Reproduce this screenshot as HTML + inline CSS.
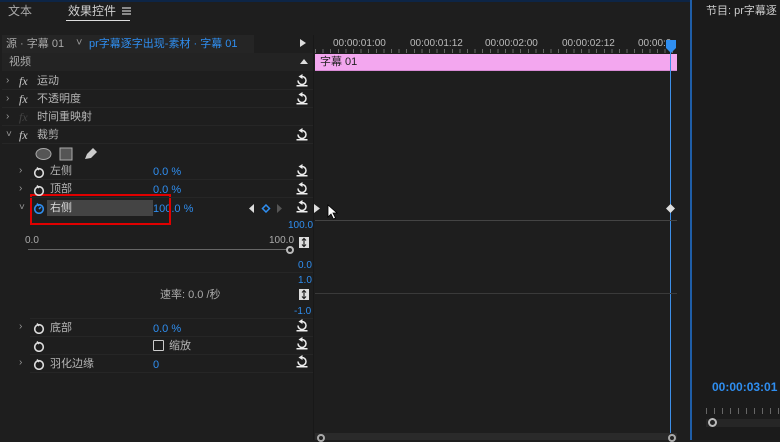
<!DOCTYPE html>
<html><head><meta charset="utf-8"><style>
*{margin:0;padding:0;box-sizing:border-box}
body{width:780px;height:440px;background:#1e1e1e;overflow:hidden;position:relative;font-family:"Liberation Sans","Noto Sans CJK SC",sans-serif;color:#b5b5b5;font-size:11px}
.t{position:absolute;white-space:nowrap;line-height:13px}
.b{color:#2f8ef0}
.r{position:absolute;left:296px;width:12px;height:13px}
.line{position:absolute;height:1px;background:#262626}
.sw{position:absolute;width:12px;height:12px}
.ch{position:absolute;color:#999;font-size:10px}
</style></head><body>
<div style="position:absolute;left:0;top:0;width:690px;height:2px;background:#0d2546"></div>
<div style="position:absolute;left:690px;top:0;width:2px;height:440px;background:#1f5ea8"></div>
<div style="position:absolute;left:692px;top:0;width:88px;height:440px;background:#1b1b1b"></div>
<div class="t" style="left:8px;top:5px;font-size:12px;color:#aaa">文本</div>
<div class="t" style="left:68px;top:5px;font-size:12px;color:#d0d0d0">效果控件</div>
<svg style="position:absolute;left:122px;top:7px" width="9" height="8"><path d="M0 1H9M0 4H9M0 7H9" stroke="#ccc" stroke-width="1.2"/></svg>
<div style="position:absolute;left:66px;top:20px;width:64px;height:1px;background:#ddd"></div>
<!-- source row -->
<div style="position:absolute;left:2px;top:35px;width:252px;height:18px;background:#252525"></div>
<div style="position:absolute;left:2px;top:53px;width:311px;height:18px;background:#232323"></div>
<div class="t" style="left:6px;top:38px;color:#a8a8a8">源 · 字幕 01</div>
<div class="t" style="left:76px;top:37px;color:#999">˅</div>
<div class="t b" style="left:89px;top:38px">pr字幕逐字出现-素材 · 字幕 01</div>
<svg style="position:absolute;left:300px;top:39px" width="6" height="8"><path d="M0 0L6 4L0 8Z" fill="#ddd"/></svg>
<svg style="position:absolute;left:300px;top:59px" width="8" height="5"><path d="M0 5L4 0L8 5Z" fill="#ddd"/></svg>
<div class="t" style="left:9px;top:56px;color:#aaa">视频</div>
<!-- rows -->
<div class="ch" style="left:6px;top:75px">›</div><div class="t" style="left:19px;top:75px;font-style:italic;font-family:'Liberation Serif',serif;color:#ccc;font-size:12px">fx</div><div class="t" style="left:37px;top:75px">运动</div>
<div class="ch" style="left:6px;top:93px">›</div><div class="t" style="left:19px;top:93px;font-style:italic;font-family:'Liberation Serif',serif;color:#ccc;font-size:12px">fx</div><div class="t" style="left:37px;top:93px">不透明度</div>
<div class="ch" style="left:6px;top:111px">›</div><div class="t" style="left:19px;top:111px;font-style:italic;font-family:'Liberation Serif',serif;color:#444;font-size:12px">fx</div><div class="t" style="left:37px;top:111px">时间重映射</div>
<div class="ch" style="left:6px;top:129px">˅</div><div class="t" style="left:19px;top:129px;font-style:italic;font-family:'Liberation Serif',serif;color:#ccc;font-size:12px">fx</div><div class="t" style="left:37px;top:129px">裁剪</div>
<div class="line" style="left:2px;top:89px;width:311px"></div>
<div class="line" style="left:2px;top:107px;width:311px"></div>
<div class="line" style="left:2px;top:125px;width:311px"></div>
<div class="line" style="left:2px;top:143px;width:311px"></div>
<!-- shapes -->
<svg style="position:absolute;left:35px;top:147px" width="65" height="14"><ellipse cx="8.5" cy="7" rx="7.5" ry="5.5" fill="#555" stroke="#aaa"/><rect x="25" y="1" width="12" height="12" fill="#555" stroke="#aaa"/><path d="M50 12L52 7L58 1L62 5L56 11Z" fill="#ccc"/></svg>
<!-- sub rows -->
<div class="ch" style="left:19px;top:165px">›</div><div class="t" style="left:50px;top:165px">左侧</div><div class="t b" style="left:153px;top:166px">0.0 %</div>
<div class="ch" style="left:19px;top:183px">›</div><div class="t" style="left:50px;top:183px">顶部</div><div class="t b" style="left:153px;top:184px">0.0 %</div>
<div class="ch" style="left:19px;top:202px">˅</div>
<div style="position:absolute;left:47px;top:200px;width:106px;height:16px;background:#444"></div>
<div class="t" style="left:50px;top:202px;color:#ddd">右侧</div><div class="t b" style="left:153px;top:203px">100.0 %</div>
<div style="position:absolute;left:30px;top:194px;width:141px;height:31px;border:2px solid #e00000"></div>
<svg style="position:absolute;left:249px;top:204px" width="36" height="9"><path d="M5 0L0 4.5L5 9Z" fill="#ddd"/><path d="M17 1L20.5 4.5L17 8L13.5 4.5Z" fill="none" stroke="#2f8ef0" stroke-width="1.5"/><path d="M28 0L33 4.5L28 9Z" fill="#555"/></svg>
<svg style="position:absolute;left:314px;top:204px" width="6" height="9"><path d="M0 0L6 4.5L0 9Z" fill="#ddd"/></svg>
<!-- stopwatches -->
<svg class="sw" style="left:33px;top:166px"><circle cx="6" cy="7" r="4.3" fill="none" stroke="#ddd" stroke-width="1.6"/><path d="M4 1.5L6 4" stroke="#ddd" stroke-width="1.5"/></svg>
<svg class="sw" style="left:33px;top:184px"><circle cx="6" cy="7" r="4.3" fill="none" stroke="#ddd" stroke-width="1.6"/><path d="M4 1.5L6 4" stroke="#ddd" stroke-width="1.5"/></svg>
<svg class="sw" style="left:33px;top:202px"><circle cx="6" cy="7" r="4.3" fill="none" stroke="#2f8ef0" stroke-width="1.6"/><path d="M4 1.5L6 4M6 7L8 5" stroke="#2f8ef0" stroke-width="1.5"/></svg>
<svg class="sw" style="left:33px;top:322px"><circle cx="6" cy="7" r="4.3" fill="none" stroke="#ddd" stroke-width="1.6"/><path d="M4 1.5L6 4" stroke="#ddd" stroke-width="1.5"/></svg>
<svg class="sw" style="left:33px;top:340px"><circle cx="6" cy="7" r="4.3" fill="none" stroke="#ddd" stroke-width="1.6"/><path d="M4 1.5L6 4" stroke="#ddd" stroke-width="1.5"/></svg>
<svg class="sw" style="left:33px;top:358px"><circle cx="6" cy="7" r="4.3" fill="none" stroke="#ddd" stroke-width="1.6"/><path d="M4 1.5L6 4" stroke="#ddd" stroke-width="1.5"/></svg>
<div class="line" style="left:30px;top:179px;width:283px"></div>
<div class="line" style="left:30px;top:197px;width:283px"></div>
<!-- graph area -->
<div class="t b" style="left:288px;top:219px;font-size:10px">100.0</div>
<div class="t" style="left:25px;top:234px;font-size:10px;color:#aaa">0.0</div>
<div class="t" style="left:269px;top:234px;font-size:10px;color:#aaa">100.0</div>
<div style="position:absolute;left:28px;top:249px;width:262px;height:1px;background:#666"></div>
<div style="position:absolute;left:286px;top:246px;width:8px;height:8px;border-radius:50%;border:2px solid #bbb;background:#222"></div>
<div class="t b" style="left:298px;top:259px;font-size:10px">0.0</div>
<div class="line" style="left:30px;top:272px;width:283px"></div>
<div class="t b" style="left:298px;top:274px;font-size:10px">1.0</div>
<div class="t" style="left:160px;top:289px;color:#aaa">速率: 0.0 /秒</div>
<div class="t b" style="left:294px;top:305px;font-size:10px">-1.0</div>
<svg style="position:absolute;left:299px;top:237px" width="10" height="11"><rect width="10" height="11" fill="#ddd"/><path d="M5 1.5V9.5M3 3.5L5 1.5L7 3.5M3 7.5L5 9.5L7 7.5" stroke="#222" stroke-width="1.2" fill="none"/></svg>
<svg style="position:absolute;left:299px;top:289px" width="10" height="11"><rect width="10" height="11" fill="#ddd"/><path d="M5 1.5V9.5M3 3.5L5 1.5L7 3.5M3 7.5L5 9.5L7 7.5" stroke="#222" stroke-width="1.2" fill="none"/></svg>
<div class="line" style="left:30px;top:318px;width:283px"></div>
<div class="ch" style="left:19px;top:321px">›</div><div class="t" style="left:50px;top:322px">底部</div><div class="t b" style="left:153px;top:323px">0.0 %</div>
<div style="position:absolute;left:153px;top:340px;width:11px;height:11px;border:1.5px solid #ccc;border-radius:1px"></div>
<div class="t" style="left:169px;top:340px">缩放</div>
<div class="ch" style="left:19px;top:357px">›</div><div class="t" style="left:50px;top:358px">羽化边缘</div><div class="t b" style="left:153px;top:359px">0</div>
<div class="line" style="left:30px;top:336px;width:283px"></div>
<div class="line" style="left:30px;top:354px;width:283px"></div>
<div class="line" style="left:30px;top:372px;width:283px"></div>
<!-- reset icons -->
<svg width="0" height="0" style="position:absolute"><defs><g id="rs"><path d="M6 2.5A4 4 0 1 1 2 6.5" fill="none" stroke="#eee" stroke-width="1.5"/><path d="M6.5 0L6.5 5L2.5 2.5Z" fill="#eee"/><rect x="0.5" y="11" width="11" height="1.5" fill="#eee"/></g></defs></svg>
<svg class="r" style="top:74px" viewBox="0 0 12 13"><use href="#rs"/></svg>
<svg class="r" style="top:92px" viewBox="0 0 12 13"><use href="#rs"/></svg>
<svg class="r" style="top:128px" viewBox="0 0 12 13"><use href="#rs"/></svg>
<svg class="r" style="top:164px" viewBox="0 0 12 13"><use href="#rs"/></svg>
<svg class="r" style="top:182px" viewBox="0 0 12 13"><use href="#rs"/></svg>
<svg class="r" style="top:200px" viewBox="0 0 12 13"><use href="#rs"/></svg>
<svg class="r" style="top:319px" viewBox="0 0 12 13"><use href="#rs"/></svg>
<svg class="r" style="top:337px" viewBox="0 0 12 13"><use href="#rs"/></svg>
<svg class="r" style="top:355px" viewBox="0 0 12 13"><use href="#rs"/></svg>
<!-- timeline -->
<div style="position:absolute;left:313px;top:35px;width:1px;height:405px;background:#181818"></div>
<div class="t" style="left:333px;top:37px;font-size:10px;color:#bbb">00:00:01:00</div>
<div class="t" style="left:410px;top:37px;font-size:10px;color:#bbb">00:00:01:12</div>
<div class="t" style="left:485px;top:37px;font-size:10px;color:#bbb">00:00:02:00</div>
<div class="t" style="left:562px;top:37px;font-size:10px;color:#bbb">00:00:02:12</div>
<div class="t" style="left:638px;top:37px;font-size:10px;color:#bbb">00:00:0</div>
<div style="position:absolute;left:315px;top:49px;width:362px;height:4px;background:repeating-linear-gradient(90deg,#666 0 1px,transparent 1px 7.6px)"></div>
<div style="position:absolute;left:315px;top:54px;width:362px;height:17px;background:#f3a7ef;border-bottom:1px solid #d88ad4"></div>
<div class="t" style="left:320px;top:56px;color:#222">字幕 01</div>
<div style="position:absolute;left:670px;top:42px;width:1px;height:398px;background:#3d8fe8"></div>
<svg style="position:absolute;left:665px;top:40px" width="12" height="13"><path d="M1 0H11V8L6 13L1 8Z" fill="#2f8ef0"/></svg>
<div style="position:absolute;left:315px;top:220px;width:362px;height:1px;background:#444"></div>
<div style="position:absolute;left:315px;top:293px;width:362px;height:1px;background:#3a3a3a"></div>
<svg style="position:absolute;left:666px;top:204px" width="9" height="9"><path d="M4.5 0L9 4.5L4.5 9L0 4.5Z" fill="#ddd"/></svg>
<svg style="position:absolute;left:327px;top:204px" width="12" height="16"><path d="M1 1V13L4 10L6.5 15L8.5 14L6 9H10Z" fill="#fff" stroke="#000" stroke-width="0.8"/></svg>
<div style="position:absolute;left:315px;top:433px;width:362px;height:7px;background:#2a2a2a"></div>
<div style="position:absolute;left:317px;top:434px;width:8px;height:8px;border-radius:50%;border:2px solid #aaa;background:#222"></div>
<div style="position:absolute;left:668px;top:434px;width:8px;height:8px;border-radius:50%;border:2px solid #aaa;background:#222"></div>
<!-- right panel -->
<div class="t" style="left:706px;top:5px;color:#ccc">节目: pr字幕逐</div>
<div class="t b" style="left:712px;top:381px;font-size:12px;font-weight:bold">00:00:03:01</div>
<div style="position:absolute;left:706px;top:408px;width:74px;height:6px;background:repeating-linear-gradient(90deg,#666 0 1px,transparent 1px 8px)"></div>
<div style="position:absolute;left:706px;top:419px;width:74px;height:8px;background:#262626"></div>
<div style="position:absolute;left:708px;top:418px;width:9px;height:9px;border-radius:50%;border:2px solid #bbb;background:#222"></div>
</body></html>
